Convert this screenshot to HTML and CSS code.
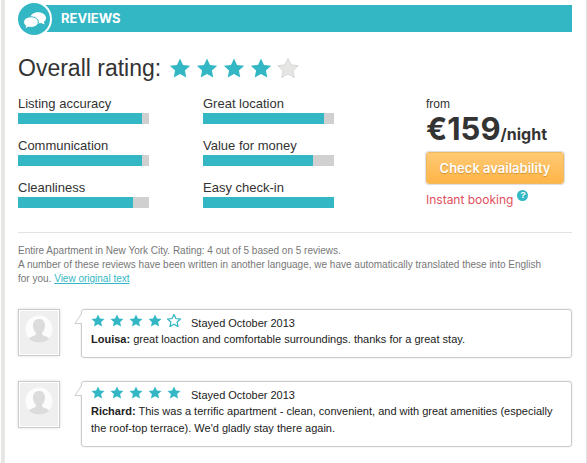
FILE: index.html
```html
<!DOCTYPE html>
<html lang="en">
<head>
    <meta charset="UTF-8">
    <meta name="viewport" content="width=device-width, initial-scale=1.0">
    <title>Reviews</title>
    <link rel="stylesheet" href="styles.css">
</head>
<body>

<svg class="sprite" aria-hidden="true">
    <symbol id="star" viewBox="0 0 22 20">
        <path d="M11 0.5l3 6.4 7.2 0.8-5.3 4.8 1.4 7-6.3-3.500-6.300 3.500 1.400-7L0.800 7.700 8 6.900z"/>
    </symbol>
    <symbol id="person" viewBox="0 0 38 43">
        <circle cx="19" cy="18" r="13.5" fill="#fcfcfc"/>
        <path d="M19 8c-4 0-6 2.600-6 6.500 0 3 1 5.500 2.800 7v2c-1 1.500-5.500 1.700-6.800 4.200 2.500 2.500 6 3.800 10 3.800s7.500-1.300 10-3.800c-1.300-2.500-5.800-2.700-6.800-4.200v-2c1.800-1.500 2.800-4 2.800-7C25 10.600 23 8 19 8z" fill="#dcdcdc"/>
    </symbol>
</svg>

<main class="panel">
    <header class="header">
        <span class="badge">
            <svg viewBox="0 0 32 32" width="32" height="32" aria-hidden="true">
                <path d="M20 9.200c4.500 0 8 2.500 8 5.700 0 1.700-.9 3-2.200 4 .1 1 .6 1.700 1.200 2.300-1.500 0-2.900-.4-4-1.100-1 .2-2 .3-3 .3-4.500 0-7.700-2.400-7.700-5.500s3.200-5.700 7.700-5.700z" fill="#fff"/>
                <path d="M13 13.800c4.200 0 7.300 2.300 7.300 5.300s-3.100 5.300-7.300 5.300c-.9 0-1.800-.1-2.600-.3-1 .8-2.400 1.400-4 1.400.8-.8 1.200-1.600 1.300-2.600-1.300-1-2.100-2.300-2.100-3.800 0-3 3.200-5.300 7.400-5.300z" fill="#fff" stroke="#33b7c5"/>
            </svg>
        </span>
        <h2 class="title">REVIEWS</h2>
    </header>

    <div class="overall">
        <h1>Overall rating:</h1>
        <div class="stars stars-large" role="img" aria-label="4 out of 5">
            <svg><use href="#star"/></svg>
            <svg><use href="#star"/></svg>
            <svg><use href="#star"/></svg>
            <svg><use href="#star"/></svg>
            <svg class="off"><use href="#star"/></svg>
        </div>
    </div>

    <section class="summary">
        <div class="ratings">
            <div class="rating">Listing accuracy<div class="bar"><div class="fill" style="width: 95%"></div></div></div>
            <div class="rating">Great location<div class="bar"><div class="fill" style="width: 92%"></div></div></div>
            <div class="rating">Communication<div class="bar"><div class="fill" style="width: 95%"></div></div></div>
            <div class="rating">Value for money<div class="bar"><div class="fill" style="width: 84%"></div></div></div>
            <div class="rating">Cleanliness<div class="bar"><div class="fill" style="width: 88%"></div></div></div>
            <div class="rating">Easy check-in<div class="bar"><div class="fill" style="width: 100%"></div></div></div>
        </div>
        <div class="booking">
            <div class="from">from</div>
            <div class="price">€159<span class="unit">/night</span></div>
            <button class="check-btn" type="button">Check availability</button>
            <div class="instant">Instant booking <button class="help" type="button" aria-label="Help">?</button></div>
        </div>
    </section>

    <p class="note">
        Entire Apartment in New York City. Rating: 4 out of 5 based on 5 reviews.<br>
        A number of these reviews have been written in another language, we have automatically translated these into English<br>
        for you. <a href="#">View original text</a>
    </p>

    <article class="review">
        <div class="avatar"><svg><use href="#person"/></svg></div>
        <div class="bubble">
            <svg class="tail" viewBox="0 0 8 12"><path d="M8 0L1 10.500H8" fill="#fff" stroke="#ccc"/></svg>
            <div class="meta">
                <div class="stars" role="img" aria-label="4 out of 5">
                    <svg><use href="#star"/></svg>
                    <svg><use href="#star"/></svg>
                    <svg><use href="#star"/></svg>
                    <svg><use href="#star"/></svg>
                    <svg class="outline"><use href="#star"/></svg>
                </div>
                <span class="date">Stayed October 2013</span>
            </div>
            <p><strong>Louisa:</strong> great loaction and comfortable surroundings. thanks for a great stay.</p>
        </div>
    </article>

    <article class="review">
        <div class="avatar"><svg><use href="#person"/></svg></div>
        <div class="bubble">
            <svg class="tail" viewBox="0 0 8 12"><path d="M8 0L1 10.500H8" fill="#fff" stroke="#ccc"/></svg>
            <div class="meta">
                <div class="stars" role="img" aria-label="5 out of 5">
                    <svg><use href="#star"/></svg>
                    <svg><use href="#star"/></svg>
                    <svg><use href="#star"/></svg>
                    <svg><use href="#star"/></svg>
                    <svg><use href="#star"/></svg>
                </div>
                <span class="date">Stayed October 2013</span>
            </div>
            <p><strong>Richard:</strong> This was a terrific apartment - clean, convenient, and with great amenities (especially the roof-top terrace). We'd gladly stay there again.</p>
        </div>
    </article>
</main>

</body>
</html>
```
FILE: styles.css
```css
* {
    box-sizing: border-box;
}

body {
    margin: 0;
    background-color: #fff;
    color: #333;
    font-family: "Liberation Sans", Arial, sans-serif;
    font-size: 13px;
}

h1, h2, p {
    margin: 0;
    font-weight: normal;
}

.sprite {
    display: none;
}

.panel {
    min-height: 100vh;
    margin-left: 1px;
    padding: 3px 14px 16px 13px;
    border-left: 4px solid #e6e7e4;
    border-right: 1px solid #e2e2e2;
}

.header {
    display: flex;
    align-items: center;
    height: 32px;
    background: linear-gradient(#33b7c5, #33b7c5) 16px 2px / 100% 27px no-repeat;
}

.badge {
    height: 32px;
    border-radius: 50%;
    background-color: #33b7c5;
    box-shadow: 0 0 0 2px #fff;
}

.badge svg {
    display: block;
}

.title {
    padding: 0 0 3px 11px;
    color: #fff;
    font-family: Inter, sans-serif;
    font-size: 13px;
    font-weight: 700;
}

.overall {
    display: flex;
    align-items: center;
    gap: 8px;
    padding: 17px 0 11px;
}

.overall h1 {
    font-size: 23px;
    line-height: 32px;
}

.stars {
    display: flex;
    gap: 5px;
    fill: #33b7c5;
}

.stars svg {
    width: 14px;
    height: 13px;
}

.stars-large svg {
    width: 22px;
    height: 20px;
}

.stars .off {
    fill: #e6e6e4;
    stroke: #d6d6d4;
}

.stars .outline {
    fill: #fff;
    stroke: #33b7c5;
    stroke-width: 2px;
}

.summary {
    display: flex;
    padding-bottom: 22px;
    border-bottom: 1px solid #e2e2e2;
}

.ratings {
    display: grid;
    flex: 1;
    grid-template-columns: repeat(2, 1fr);
    gap: 13px 54px;
    align-content: start;
    padding-right: 92px;
}

.rating {
    line-height: 18px;
}

.bar {
    height: 11px;
    background-color: #d0d0d0;
}

.fill {
    height: 100%;
    background-color: #33b7c5;
}

.booking {
    width: 146px;
    font-family: Inter, sans-serif;
}

.from {
    font-family: "Liberation Sans", Arial, sans-serif;
    font-size: 12px;
    line-height: 18px;
}

.price {
    display: flex;
    align-items: baseline;
    font-size: 31px;
    font-weight: 700;
    line-height: 32px;
    white-space: nowrap;
}

.unit {
    font-size: 16px;
    line-height: 20px;
}

.check-btn {
    display: block;
    width: 138px;
    height: 32px;
    margin-top: 7px;
    padding: 0;
    border: 1px solid #f0b95e;
    border-radius: 3px;
    background: linear-gradient(#ffc974, #ffb548);
    box-shadow: 0 0 1px 1px #ddd;
    color: #fff;
    font-family: inherit;
    font-size: 13px;
    font-weight: 600;
    text-shadow: 0 1px 1px #d09030;
    cursor: pointer;
}

.instant {
    display: flex;
    gap: 4px;
    margin-top: 6px;
    color: #e0505e;
    font-size: 12px;
    line-height: 20px;
}

.help {
    width: 11px;
    height: 11px;
    padding: 0;
    border: 0;
    border-radius: 50%;
    background-color: #33b7c5;
    color: #fff;
    font-size: 9px;
    font-weight: 700;
    line-height: 11px;
    cursor: pointer;
}

.note {
    padding: 11px 0 23px;
    color: #777;
    font-size: 10px;
    line-height: 14px;
}

.note a {
    color: #33b7c5;
}

.review {
    display: flex;
    align-items: flex-start;
    gap: 21px;
    margin-bottom: 23px;
}

.review:last-child {
    margin-bottom: 0;
}

.avatar {
    width: 42px;
    height: 47px;
    padding: 1px;
    border: 1px solid #ccc;
    box-shadow: 0 0 3px #ddd;
}

.avatar svg {
    display: block;
    width: 38px;
    height: 43px;
    background-color: #efefef;
}

.bubble {
    position: relative;
    flex: 1;
    padding: 4px 9px 9px;
    border: 1px solid #ccc;
    border-radius: 3px;
    box-shadow: 0 0 2px #ddd;
    color: #222;
    font-size: 11px;
    line-height: 17px;
}

/* pointer towards the avatar */
.tail {
    position: absolute;
    top: 3px;
    left: -8px;
    width: 8px;
    height: 12px;
}

.meta {
    display: flex;
    gap: 10px;
    height: 17px;
}

.date {
    padding-top: 1px;
}
```
